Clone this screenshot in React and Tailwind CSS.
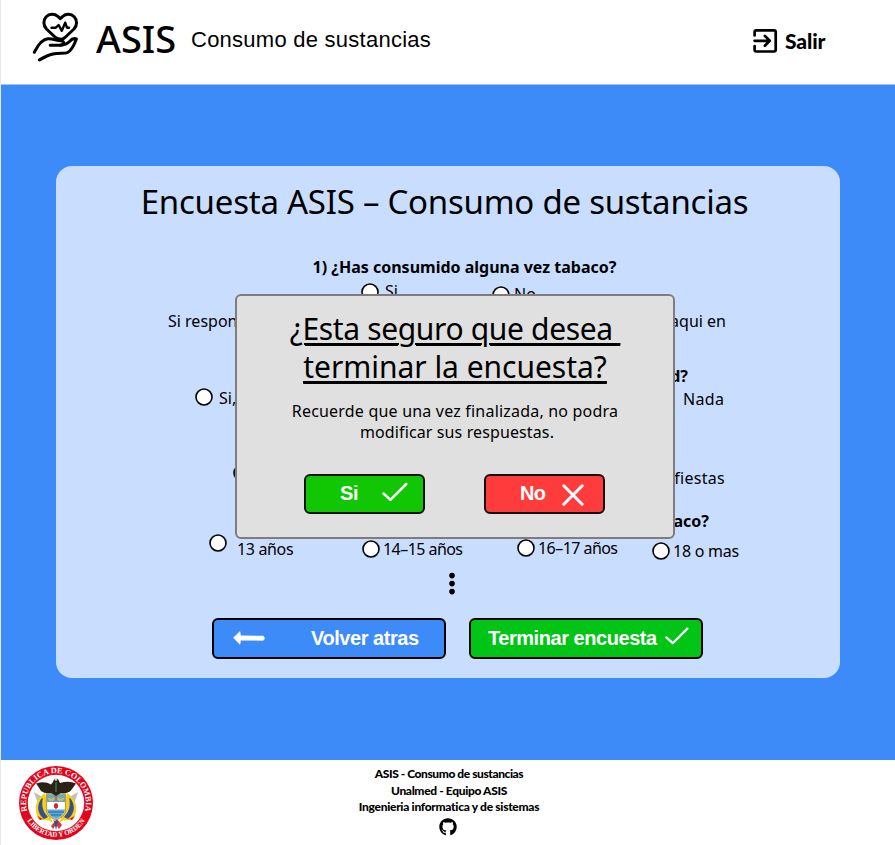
import React from "react";
import { FaGithub } from "react-icons/fa";

const ui = "font-['Noto_Sans',sans-serif]";
const arial = "font-['Liberation_Sans',Arial,sans-serif]";

function HeartHandIcon() {
  return (
    <svg width="50" height="52" viewBox="30 11 50 52" fill="none" stroke="#000" strokeWidth="3" strokeLinecap="round" strokeLinejoin="round">
      <path d="M55.5 37.5 L46.5 29 C43.2 25.5 43 20.3 46 17 C49.4 13.5 54.8 13.7 57.8 16.3 L60.3 18.7 L62.8 16.3 C66.2 13.3 71 13.6 74.2 16.8 C77.4 20.3 77.3 25.5 74 29 L65.5 37 C64 38.4 63.4 39.2 61.5 39.2 C59 39.2 57 38.8 55.5 37.5" />
      <path d="M51.5 27.7 H55.8 L58.6 25 L61.8 30.8 L65.2 22.7 L67 27.7 H69" strokeWidth="2.4" />
      <path d="M34.3 52.3 C38.5 44 42.5 39 48 38.8 C53.5 38.6 56 40.5 60.8 40.7 C63.5 40.8 64.2 42.4 63.2 43.7 C62.5 44.8 61 45.2 59.5 45.2 H50.2" />
      <path d="M60.5 45.2 C65 45 67.5 43.5 69.5 41.5 C71.5 39.2 74.5 38.2 76.4 39 C74.8 43.3 72 50.3 67.6 52.5 C64.5 54 59 52.6 53 54 C47.5 55.2 43.6 57.5 39.3 60" />
    </svg>
  );
}

function ExitIcon() {
  return (
    <svg width="26" height="26" viewBox="0 0 26 26" fill="none" stroke="#000" strokeWidth="2.7" strokeLinecap="round" strokeLinejoin="round">
      <path d="M2.6 7.5 V4 Q2.6 2.3 4.3 2.3 H22 Q23.7 2.3 23.7 4 V21.8 Q23.7 23.5 22 23.5 H4.3 Q2.6 23.5 2.6 21.8 V18" />
      <path d="M2.6 12.8 H17.3 M12.9 7.9 L17.7 12.8 L12.9 17.7" />
    </svg>
  );
}

function CheckIcon({ className }) {
  return (
    <svg className={className} width="26" height="20" viewBox="0 0 26 20" fill="none" stroke="#fff" strokeWidth="2.5" strokeLinecap="round" strokeLinejoin="round">
      <path d="M1.5 11.5 L8.4 17.8 L24.2 2" />
    </svg>
  );
}

function CrossIcon({ className }) {
  return (
    <svg className={className} width="22" height="22" viewBox="0 0 22 22" fill="none" stroke="#fff" strokeWidth="3" strokeLinecap="round">
      <path d="M1.8 1.8 L20.2 20.2 M20.2 1.8 L1.8 20.2" />
    </svg>
  );
}

function ArrowIcon({ className }) {
  return (
    <svg className={className} width="32" height="14" viewBox="0 0 32 14">
      <path d="M7 0.5 L0.4 6.8 L7 13.4 L7.6 9.2 L30 9.4 Q31.6 8.8 31.4 7 Q31.2 5.2 29.8 5 L7.6 4.8 Z" fill="#fff" stroke="#fff" strokeWidth="0.5" strokeLinejoin="round" />
    </svg>
  );
}

function Emblem() {
  return (
    <svg width="76" height="76" viewBox="0 0 76 76">
      <defs>
        <path id="ringTop" d="M9.9 48.2 A29.9 29.9 0 1 1 66.1 48.2" />
        <path id="ringBottom" d="M8.5 54.8 A34.1 34.1 0 0 0 67.5 54.8" />
      </defs>
      <circle cx="38" cy="38" r="37" fill="#e3051b" />
      <circle cx="38" cy="38" r="28.2" fill="#fff" />
      <g fill="#fff" fontFamily="Liberation Serif, serif" fontWeight="700" fontSize="8">
        <text><textPath href="#ringTop" startOffset="50%" textAnchor="middle" textLength="110" lengthAdjust="spacingAndGlyphs">REPUBLICA DE COLOMBIA</textPath></text>
        <text fontSize="7.2"><textPath href="#ringBottom" startOffset="50%" textAnchor="middle" textLength="69" lengthAdjust="spacingAndGlyphs">LIBERTAD Y ORDEN</textPath></text>
      </g>
      <path d="M16 27 L26 33 L20 39 Z M60 27 L50 33 L56 39 Z" fill="#b7c3bd" />
      <path d="M27 28 C17 34 16 43 20 54 C25 57 33 52 36 61 L31 48 Z" fill="#f7d117" />
      <path d="M49 28 C59 34 60 43 56 54 C51 57 43 52 40 61 L45 48 Z" fill="#f7d117" />
      <path d="M23 34 C18 42 20 49 26 54 L30 52 C25 47 23 40 25 33 Z M53 34 C58 42 56 49 50 54 L46 52 C51 47 53 40 51 33 Z" fill="#354f93" />
      <path d="M19.5 51 L25 54 L22 55 Z M56.5 51 L51 54 L54 55 Z" fill="#d81e2c" />
      <path d="M28.5 29 H47.5 V45 Q47.5 51 38 55 Q28.5 51 28.5 45 Z" fill="#fff" stroke="#c9a02e" strokeWidth="1.3" />
      <path d="M29 29.5 H47 V37 H29 Z M29 44.5 H47 Q46.8 50 38 54 Q29.2 50 29 44.5" fill="#59a9dc" />
      <path d="M30.5 33 Q33 37 36 33 M45.5 33 Q43 37 40 33" stroke="#e5bb36" strokeWidth="2.2" fill="none" />
      <path d="M38 30 V36" stroke="#bb7438" strokeWidth="2" />
      <path d="M36 39.5 Q38 36.5 40 39.5 V42.5 L38 44 L36 42.5 Z" fill="#db1f2d" />
      <path d="M30 47 H46 M33 50 H43" stroke="#246e91" strokeWidth="1.2" />
      <path d="M18 18.5 Q27 15.5 33 19.5 L35 17 Q36 13 40 14 L42 18 Q51 15.5 58 18.5 Q55 23 52 26.5 Q48 29 43 28 L38 31 L33 28 Q27 29 23 26 Q20 21 18 18.5" fill="#2c2117" />
      <path d="M38 17 V27" stroke="#2f5d35" strokeWidth="2" />
      <circle cx="38" cy="14.6" r="1.3" fill="#d8cdbd" />
      <path d="M35 55 L41 64 L44 60 L39 54 L33 61 L35 64 L40 57" fill="#d9333b" />
      <path d="M36 56 L38 65 L40 56 Z" fill="#354f93" />
    </svg>
  );
}

function Radio({ className }) {
  return (
    <svg className={`shrink-0 ${className || ""}`} width="18" height="18" viewBox="0 0 18 18">
      <circle cx="9" cy="9" r="8" fill="#fff" stroke="#000" strokeWidth="1.6" />
    </svg>
  );
}

function Option({ className, radio, label, children }) {
  return (
    <div className={`flex shrink-0 items-start ${className}`}>
      <Radio className={radio} />
      <span className={`leading-6 whitespace-nowrap ${label}`}>{children}</span>
    </div>
  );
}

function Header() {
  return (
    <header className="flex h-[84px] items-center bg-white pl-[29px]">
      <div className="-mt-[10px]"><HeartHandIcon /></div>
      <span className={`${ui} ml-[16px] w-[95px] -mt-[8px] text-[38px] leading-[50px] font-medium tracking-[0px]`}>ASIS</span>
      <span className={`${arial} -mt-[4px] w-[561px] text-[22px] leading-7 tracking-[0.25px]`}>Consumo de sustancias</span>
      <button className="-mt-[2px] flex items-center">
        <ExitIcon />
        <span className="ml-[7px] font-['Lato',sans-serif] text-[21px] leading-7 font-black tracking-[-0.1px]">Salir</span>
      </button>
    </header>
  );
}

function Survey() {
  return (
    <section className={`${ui} flex h-[512px] w-[784px] flex-col rounded-[16px] bg-[#c9ddff] text-[16px]`}>
      <h1 className="h-[72px] pr-[7px] text-center text-[33px] leading-[72px] whitespace-nowrap tracking-[-0.24px]">Encuesta ASIS – Consumo de sustancias</h1>
      <h2 className="mt-[17px] ml-[33px] h-[24px] w-[751px] text-center leading-6 font-bold">1) ¿Has consumido alguna vez tabaco?</h2>
      <div className="flex h-[24px] pl-[305px]">
        <Option className="w-[131px]" radio="mt-[4px]" label="ml-[6px]">Si</Option>
        <Option className="" radio="mt-[7px]" label="ml-[4px] mt-[3px]">No</Option>
      </div>
      <p className="mt-[6px] flex h-[24px] justify-between pr-[114px] pl-[112px] leading-6">
        <span>Si respondes</span><span>sigue aqui en</span>
      </p>
      <h2 className="mt-[33px] h-[20px] pr-[152px] text-right leading-5 font-bold">cantidad?</h2>
      <div className="flex h-[24px] pl-[139px]">
        <Option className="w-[461px]" radio="mt-[2px]" label="ml-[6px]">Si, poco</Option>
        <Option className="" radio="mt-[3px]" label="ml-[9px] mt-[1px] tracking-[0.3px]">Nada</Option>
      </div>
      <div className="mt-[51px] flex h-[29px] justify-between pr-[115px] pl-[177px]">
        <Option className="" radio="mt-[3px]" label="ml-[6px] mt-[5px]">Solo</Option>
        <span className="mt-[5px] leading-6 tracking-[0.3px]">fiestas</span>
      </div>
      <h2 className="mt-[21px] h-[20px] pr-[131px] text-right leading-5 font-bold">3) ¿A que edad probaste el tabaco?</h2>
      <div className="flex h-[40px] pl-[153px]">
        <Option className="w-[153px]" radio="mt-[3px]" label="ml-[10px] mt-[6px] tracking-[-0.35px]">13 años</Option>
        <Option className="w-[155px]" radio="mt-[9px]" label="ml-[3px] mt-[6px] tracking-[-0.55px]">14–15 años</Option>
        <Option className="w-[135px]" radio="mt-[8px]" label="ml-[3px] mt-[5px] tracking-[-0.55px]">16–17 años</Option>
        <Option className="" radio="mt-[11px]" label="ml-[3px] mt-[8px] tracking-[-0.25px]">18 o mas</Option>
      </div>
      <svg className="ml-[391px]" width="10" height="25" viewBox="0 0 10 25">
        <circle cx="5" cy="4.6" r="2.8" /><circle cx="5" cy="12.6" r="2.8" /><circle cx="5" cy="20.6" r="2.8" />
      </svg>
      <div className={`${arial} mt-[22px] flex gap-[23px] pl-[156px] text-[20px] font-bold text-white`}>
        <button className="flex h-[41px] w-[234px] items-center rounded-[6px] border-2 border-black bg-[#3d8bf8] pl-[19px]">
          <ArrowIcon className="-mt-px" /><span className="-mt-[2px] ml-[46px] whitespace-nowrap tracking-[-0.45px]">Volver atras</span>
        </button>
        <button className="flex h-[41px] w-[234px] items-center rounded-[6px] border-2 border-black bg-[#00c416] pl-[17px]">
          <span className="-mt-[2px] w-[177px] text-left whitespace-nowrap tracking-[-0.45px]">Terminar encuesta</span><CheckIcon className="-mt-[6px] w-[24px]" />
        </button>
      </div>
    </section>
  );
}

function ConfirmDialog() {
  return (
    <div role="dialog" className={`${ui} absolute top-[294px] left-[234px] flex h-[245px] w-[440px] flex-col rounded-[6px] border-2 border-[#7d7d7d] bg-[#e0e0e0]`}>
      <h2 className="mt-[14px] text-center text-[30px] leading-[38px] whitespace-pre underline decoration-2 underline-offset-[3px]">
        <span className="block tracking-[-0.35px] underline">{"¿Esta seguro que desea "}</span>
        <span className="block tracking-[-0.03px] underline">terminar la encuesta?</span>
      </h2>
      <p className="mt-[15px] text-center text-[16px] leading-[21px]">
        <span className="tracking-[0.2px]">Recuerde que una vez finalizada, no podra</span><br />
        <span className="ml-[4px] tracking-[0.12px]">modificar sus respuestas.</span>
      </p>
      <div className={`${arial} mt-[31px] flex gap-[59px] pl-[67px] text-[20px] font-bold text-white`}>
        <button className="flex h-[40px] w-[121px] items-center rounded-[6px] border-2 border-[#111] bg-[#11c704] pl-[34px]">
          <span className="-mt-[2px] w-[42px] text-left tracking-[-0.4px]">Si</span><CheckIcon className="-mt-[4px]" />
        </button>
        <button className="flex h-[40px] w-[121px] items-center rounded-[6px] border-2 border-[#111] bg-[#ff3b3b] pl-[34px]">
          <span className="-mt-[2px] w-[42px] text-left tracking-[-0.6px]">No</span><CrossIcon className="mt-px" />
        </button>
      </div>
    </div>
  );
}

function Footer() {
  return (
    <footer className="flex h-[85px] bg-white pl-[17px]">
      <div className="w-[76px] pt-[5px]"><Emblem /></div>
      <div className="ml-[205px] flex w-[300px] flex-col items-center pt-[6px] font-['Lato',sans-serif] text-[12px] leading-[16.5px] font-black tracking-[-0.3px]">
        <span className="tracking-[-0.43px]">ASIS - Consumo de sustancias</span>
        <span className="tracking-[-0.35px]">Unalmed - Equipo ASIS</span>
        <span>Ingenieria informatica y de sistemas</span>
        <FaGithub className="mt-[2px] mr-[3px]" size={18} />
      </div>
    </footer>
  );
}

export default function App() {
  return (
    <div className="relative h-[845px] w-[895px] overflow-hidden border-l border-[#e8e8e8] bg-white text-black">
      <Header />
      <main className="h-[676px] border-t border-[#9cc3fb] bg-[#3d8bf8] pt-[81px] pl-[55px]">
        <Survey />
      </main>
      <Footer />
      <ConfirmDialog />
    </div>
  );
}
